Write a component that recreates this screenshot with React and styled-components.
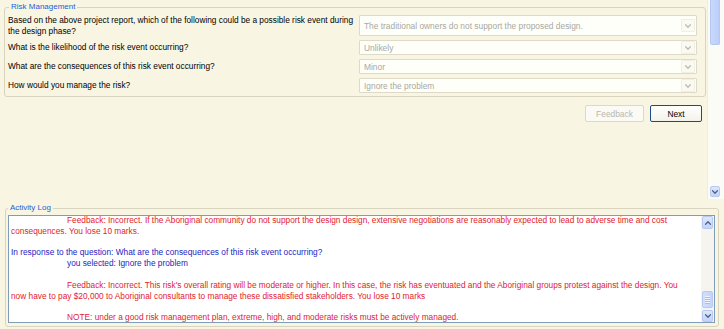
import styled, { createGlobalStyle } from "styled-components";

const GlobalStyle = createGlobalStyle`
  html, body {
    margin: 0;
    padding: 0;
  }
  body {
    background: #f8f5e3;
    font-family: "Liberation Sans", Arial, sans-serif;
    font-size: 8.3px;
    color: #000;
  }
`;

const questions = [
  {
    text: "Based on the above project report, which of the following could be a possible risk event during the design phase?",
    answer: "The traditional owners do not support the proposed design.",
    tall: true,
  },
  { text: "What is the likelihood of the risk event occurring?", answer: "Unlikely" },
  { text: "What are the consequences of this risk event occurring?", answer: "Minor" },
  { text: "How would you manage the risk?", answer: "Ignore the problem" },
];

const log = [
  {
    tone: "red",
    indent: true,
    text: "Feedback: Incorrect. If the Aboriginal community do not support the design design, extensive negotiations are reasonably expected to lead to adverse time and cost consequences. You lose 10 marks.",
  },
  {
    tone: "blue",
    gap: true,
    text: "In response to the question: What are the consequences of this risk event occurring?",
  },
  { tone: "blue", indent: true, text: "you selected: Ignore the problem" },
  {
    tone: "red",
    indent: true,
    gap: true,
    text: "Feedback: Incorrect. This risk's overall rating will be moderate or higher. In this case, the risk has eventuated and the Aboriginal groups protest against the design. You now have to pay $20,000 to Aboriginal consultants to manage these dissatisfied stakeholders. You lose 10 marks",
  },
  {
    tone: "red",
    indent: true,
    gap: true,
    text: "NOTE: under a good risk management plan, extreme, high, and moderate risks must be actively managed.",
  },
];

function Chevron({ up, color = "#4d6185", size = 9 }) {
  return (
    <svg width={size} height={size} viewBox="0 0 10 10">
      <path
        d={up ? "M2 6.5 L5 3.5 L8 6.5" : "M2 3.5 L5 6.5 L8 3.5"}
        fill="none"
        stroke={color}
        strokeWidth="1.6"
        strokeLinecap="round"
        strokeLinejoin="round"
      />
    </svg>
  );
}

function App() {
  return (
    <Page>
      <GlobalStyle />
      <TopPane>
        <Content>
          <Group $margin="2px 1px 0 4px" $padding="3px 8px 3px 3px">
            <Legend $offset={1}>Risk Management</Legend>
            <QuestionGrid>
              {questions.map((q) => (
                <Row key={q.text}>
                  <Question>{q.text}</Question>
                  <Select $tall={q.tall}>
                    <SelectValue>{q.answer}</SelectValue>
                    <SelectArrow>
                      <Chevron color="#bdbcb2" size={8} />
                    </SelectArrow>
                  </Select>
                </Row>
              ))}
            </QuestionGrid>
          </Group>
          <ButtonRow>
            <Button $w={59} disabled>
              Feedback
            </Button>
            <Button $w={52} $primary>
              Next
            </Button>
          </ButtonRow>
        </Content>
        <PageScroll>
          <PageThumb />
          <ArrowButton $w={10} $h={11}>
            <Chevron size={8} />
          </ArrowButton>
        </PageScroll>
      </TopPane>
      <Group $margin="4px 5px 0 5px" $padding="2px 3px 3px 2px">
        <Legend $offset={0}>Activity Log</Legend>
        <LogBox>
          <LogText>
            <LogScroll>
              {log.map((entry, i) => (
                <LogLine key={i} $tone={entry.tone} $indent={entry.indent} $gap={entry.gap}>
                  {entry.text}
                </LogLine>
              ))}
            </LogScroll>
          </LogText>
          <LogScrollBar>
            <ArrowButton $w={11} $h={13}>
              <Chevron up size={8} />
            </ArrowButton>
            <ScrollEnd>
              <LogThumb>
                <Grip />
                <Grip />
                <Grip />
                <Grip />
              </LogThumb>
              <ArrowButton $w={11} $h={12}>
                <Chevron size={8} />
              </ArrowButton>
            </ScrollEnd>
          </LogScrollBar>
        </LogBox>
      </Group>
    </Page>
  );
}

const Page = styled.div`
  width: 724px;
  height: 329px;
  display: flex;
  flex-direction: column;
  overflow: hidden;
`;

const TopPane = styled.div`
  height: 199px;
  flex-shrink: 0;
  display: flex;
`;

const Content = styled.div`
  flex: 1;
  min-width: 0;
  display: flex;
  flex-direction: column;
`;

const Group = styled.fieldset`
  margin: ${(p) => p.$margin};
  padding: ${(p) => p.$padding};
  border: 1px solid #d8d4c0;
  border-radius: 3px;
  min-width: 0;
`;

const Legend = styled.legend`
  margin-left: ${(p) => p.$offset}px;
  padding: 0 2px;
  font-size: 8px;
  line-height: 10px;
  color: #2a5bd7;
`;

const QuestionGrid = styled.div`
  display: flex;
  flex-direction: column;
  gap: 4px;
`;

const Row = styled.div`
  display: grid;
  grid-template-columns: 1fr 338px;
  column-gap: 3px;
  align-items: center;
`;

const Question = styled.div`
  line-height: 10.5px;
`;

const Select = styled.div`
  height: ${(p) => (p.$tall ? 21 : 15)}px;
  box-sizing: border-box;
  border: 1px solid #dedac7;
  border-radius: 1px;
  background: #fffffa;
  display: flex;
  align-items: center;
  padding: 0 1px 0 4px;
`;

const SelectValue = styled.span`
  flex: 1;
  color: #a9a89f;
  font-size: 8.4px;
  white-space: nowrap;
`;

const SelectArrow = styled.span`
  width: 12px;
  height: 11px;
  display: flex;
  align-items: center;
  justify-content: center;
  background: #fbfaf2;
  border: 1px solid #f1efe3;
  border-radius: 1px;
`;

const ButtonRow = styled.div`
  display: flex;
  justify-content: flex-end;
  gap: 6px;
  margin-top: 8px;
  padding-right: 5px;
`;

const Button = styled.button`
  width: ${(p) => p.$w}px;
  height: 17px;
  padding: 0;
  font-family: inherit;
  font-size: 8.4px;
  border-radius: 2px;
  background: ${(p) => (p.$primary ? "linear-gradient(#ffffff, #f3f2ea)" : "#fbfaf4")};
  border: 1px solid ${(p) => (p.$primary ? "#1f4a86" : "#dcd9c8")};
  color: ${(p) => (p.$primary ? "#000" : "#b9b8ae")};
`;

const PageScroll = styled.div`
  width: 17px;
  box-sizing: border-box;
  border-left: 1px solid #efede0;
  background: #fcfcf7;
  display: flex;
  flex-direction: column;
  justify-content: space-between;
  padding: 0 4px 2px 2px;
`;

const PageThumb = styled.div`
  height: 45px;
  box-sizing: border-box;
  border: 1px solid #b3c7f2;
  border-top: none;
  border-radius: 0 0 2px 2px;
  background: linear-gradient(90deg, #c9d8fc, #bccffa);
`;

const ArrowButton = styled.div`
  width: ${(p) => p.$w}px;
  height: ${(p) => p.$h}px;
  box-sizing: border-box;
  border: 1px solid #b7c9f0;
  border-radius: 2px;
  background: linear-gradient(#dde7fd, #c3d4fa);
  display: flex;
  align-items: center;
  justify-content: center;
`;

const LogBox = styled.div`
  height: 108px;
  box-sizing: border-box;
  border: 1px solid #7f9db9;
  background: #fff;
  display: flex;
`;

const LogText = styled.div`
  flex: 1;
  overflow: hidden;
  padding: 0 6px 0 2px;
`;

const LogScroll = styled.div`
  margin-top: -1px;
  line-height: 10.8px;
`;

const LogLine = styled.div`
  margin-top: ${(p) => (p.$gap ? "10.8px" : "0")};
  text-indent: ${(p) => (p.$indent ? "56px" : "0")};
  color: ${(p) => (p.$tone === "red" ? "#e2222c" : "#2424c2")};
`;

const LogScrollBar = styled.div`
  width: 13px;
  box-sizing: border-box;
  padding: 0 1px;
  background: #f5f4ee;
  display: flex;
  flex-direction: column;
  justify-content: space-between;
`;

const ScrollEnd = styled.div`
  display: flex;
  flex-direction: column;
  gap: 2px;
`;

const LogThumb = styled.div`
  height: 17px;
  box-sizing: border-box;
  border: 1px solid #b7c9f0;
  border-radius: 2px;
  background: linear-gradient(90deg, #d2defc, #c3d4fa);
  display: flex;
  flex-direction: column;
  justify-content: center;
  align-items: center;
  gap: 1px;
`;

const Grip = styled.span`
  width: 5px;
  height: 1px;
  background: #eef3ff;
  box-shadow: 0 1px 0 #a9bde9;
`;

export default App;
